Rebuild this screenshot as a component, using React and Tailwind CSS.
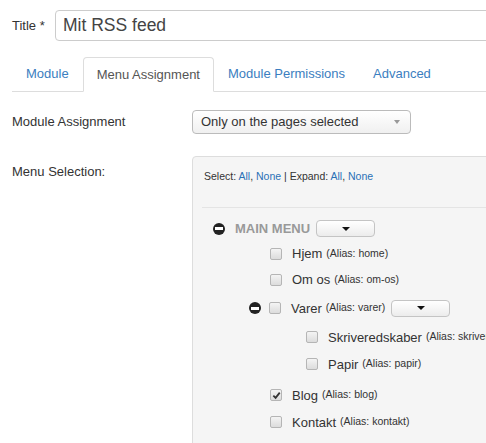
const tabs = ['Module', 'Menu Assignment', 'Module Permissions', 'Advanced']

function MinusIcon() {
  return (
    <span className="flex h-[12px] w-[12px] shrink-0 items-center justify-center rounded-full bg-[#222]">
      <span className="h-[3px] w-[8px] bg-white" />
    </span>
  )
}

function Checkbox({ checked }) {
  return (
    <span className="flex h-[12px] w-[12px] shrink-0 items-center justify-center rounded-[2px] border border-[#b5b5b5] bg-gradient-to-b from-[#f4f4f4] to-[#dcdcdc]">
      {checked && (
        <svg width="9" height="9" viewBox="0 0 10 10">
          <path d="M1.5 5.2 L4 7.6 L8.6 1.8" fill="none" stroke="#333" strokeWidth="2" />
        </svg>
      )}
    </span>
  )
}

function DropButton() {
  return (
    <span className="ml-[6px] flex h-[17px] w-[59px] shrink-0 items-center justify-center rounded-[4px] border border-[#c4c4c4] bg-gradient-to-b from-white to-[#ececec]">
      <span className="h-0 w-0 border-x-[4px] border-t-[4px] border-x-transparent border-t-[#111]" />
    </span>
  )
}

function Item({ indent, minus, checked, name, alias, h, mt = '', button }) {
  return (
    <div className={`flex items-center whitespace-nowrap ${h} ${mt} ${indent}`}>
      {minus ? (
        <span className="mr-[8px]"><MinusIcon /></span>
      ) : null}
      <Checkbox checked={checked} />
      <span className="ml-[10px] text-[13px] text-[#333]">{name}</span>
      <span className="ml-[4px] text-[10.5px] text-[#333]">(Alias: {alias})</span>
      {button && <DropButton />}
    </div>
  )
}

export default function App() {
  return (
    <div className="h-[443px] w-[486px] overflow-hidden bg-white text-[13px] text-[#333]" style={{ fontFamily: '"Liberation Sans", Arial, sans-serif' }}>
      {/* Title */}
      <div className="flex items-center pl-[12px] pt-[10px]">
        <span className="w-[43px] shrink-0 whitespace-nowrap text-[13px] text-[#333]">Title *</span>
        <div className="flex h-[31px] w-[460px] shrink-0 items-center rounded-[4px] border border-[#ccc] pl-[7px] text-[17.5px] text-[#444]">
          Mit RSS feed
        </div>
      </div>

      {/* Tabs */}
      <div className="ml-[12px] mt-[16px] flex border-b border-[#ddd]">
        {tabs.map((t, i) =>
          i === 1 ? (
            <span key={t} className="-mb-px flex h-[35px] items-center rounded-t-[4px] border border-b-transparent border-[#ddd] bg-white px-[13px] text-[#555]">
              {t}
            </span>
          ) : (
            <span key={t} className="flex h-[34px] items-center px-[14px] text-[#3b7ec0]">
              {t}
            </span>
          )
        )}
      </div>

      {/* Module assignment */}
      <div className="mt-[18px] flex items-center pl-[12px]">
        <span className="w-[180px] shrink-0">Module Assignment</span>
        <div className="flex h-[24px] w-[219px] shrink-0 items-center justify-between rounded-[4px] border border-[#bbb] bg-gradient-to-b from-white to-[#f0f0f0] pl-[8px] pr-[10px] text-[#333]">
          <span>Only on the pages selected</span>
          <span className="h-0 w-0 border-x-[3px] border-t-[4px] border-x-transparent border-t-[#999]" />
        </div>
      </div>

      {/* Menu selection */}
      <div className="mt-[22px] flex pl-[12px]">
        <span className="mt-[6px] w-[180px] shrink-0">Menu Selection:</span>
        <div className="h-[300px] w-[320px] shrink-0 overflow-hidden rounded-[4px] border border-[#ddd] bg-[#f5f5f5] pl-[9px] pt-[12px]">
          <div className="pl-[2px] text-[10.5px] text-[#333]">
            Select: <span className="text-[#2a70b5]">All</span>, <span className="text-[#2a70b5]">None</span> | Expand:{' '}
            <span className="text-[#2a70b5]">All</span>, <span className="text-[#2a70b5]">None</span>
          </div>
          <div className="mt-[22px] border-t border-[#e4e4e4]" />

          <div className="mt-[9px] flex h-[24px] items-center pl-[11px]">
            <MinusIcon />
            <span className="ml-[10px] text-[13px] font-bold text-[#999]">MAIN MENU</span>
            <DropButton />
          </div>
          <Item indent="pl-[68px]" name="Hjem" alias="home" h="h-[26px]" />
          <Item indent="pl-[68px]" name="Om os" alias="om-os" h="h-[26px]" />
          <Item indent="pl-[47px]" minus name="Varer" alias="varer" h="h-[31px]" button />
          <Item indent="pl-[104px]" name="Skriveredskaber" alias="skriveredskaber" h="h-[27px]" />
          <Item indent="pl-[104px]" name="Papir" alias="papir" h="h-[27px]" />
          <Item indent="pl-[68px]" checked name="Blog" alias="blog" h="h-[27px]" mt="mt-[4px]" />
          <Item indent="pl-[68px]" name="Kontakt" alias="kontakt" h="h-[27px]" />
        </div>
      </div>
    </div>
  )
}
